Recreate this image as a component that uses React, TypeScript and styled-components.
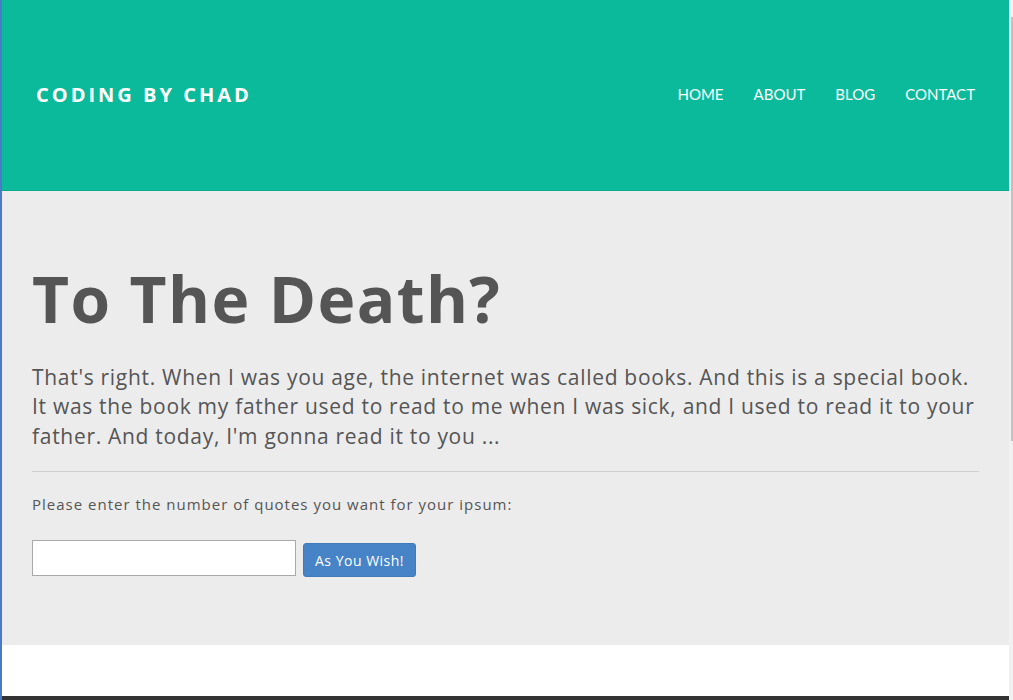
import React from "react";
import styled, { createGlobalStyle } from "styled-components";

const GlobalStyle = createGlobalStyle`
  html, body {
    margin: 0;
    padding: 0;
    overflow: hidden;
    background: #ffffff;
  }
  * { box-sizing: border-box; }
`;

const Frame = styled.div`
  display: flex;
  height: 700px;
  border-left: 2px solid #4a7bc6;
`;

const Page = styled.div`
  flex: 1;
  display: flex;
  flex-direction: column;
  min-width: 0;
`;

const Header = styled.header`
  height: 191px;
  flex-shrink: 0;
  background: #0bba9a;
  border-bottom: 1px solid #0aa78a;
  display: flex;
  align-items: center;
  justify-content: space-between;
  padding: 0 34px 2px 34px;
`;

const Logo = styled.a`
  font-family: "Open Sans", sans-serif;
  font-weight: 700;
  font-size: 20px;
  letter-spacing: 3px;
  color: #ffffff;
  text-transform: uppercase;
  text-decoration: none;
`;

const Nav = styled.nav`
  display: flex;
  gap: 30px;
`;

const NavLink = styled.a`
  font-family: Lato, sans-serif;
  font-size: 15px;
  color: #ffffff;
  text-transform: uppercase;
  text-decoration: none;
`;

const Main = styled.main`
  height: 454px;
  flex-shrink: 0;
  background: #ececec;
  padding: 60px 30px 0 30px;
  color: #555555;
`;

const Title = styled.h1`
  margin: 0;
  font-family: "Open Sans", sans-serif;
  font-weight: 700;
  font-size: 64px;
  line-height: 96px;
  letter-spacing: 1.4px;
  color: #555555;
`;

const Lead = styled.p`
  margin: 16px 0 0 0;
  font-family: "Open Sans", sans-serif;
  font-size: 21px;
  line-height: 29.4px;
  letter-spacing: 0.7px;
  color: #555555;
`;

const Rule = styled.hr`
  margin: 20px 0 20px 0;
  border: 0;
  border-top: 1px solid #cfcfcf;
`;

const Prompt = styled.p`
  margin: 0 0 24px 0;
  font-family: "Open Sans", sans-serif;
  font-size: 15px;
  line-height: 24px;
  letter-spacing: 1px;
  color: #555555;
`;

const Form = styled.form`
  display: flex;
  align-items: flex-start;
  gap: 7px;
`;

const Input = styled.input`
  width: 264px;
  height: 36px;
  border: 1px solid #a9a9a9;
  background: #ffffff;
  padding: 0 6px;
  font-size: 14px;
`;

const Button = styled.button`
  margin-top: 3px;
  height: 34px;
  padding: 0 11px;
  background: #4784c7;
  border: 1px solid #3f7ab9;
  border-radius: 3px;
  color: #ffffff;
  font-family: "Open Sans", sans-serif;
  font-size: 14px;
  letter-spacing: 0.5px;
`;

const Blank = styled.div`
  flex: 1;
  background: #ffffff;
`;

const Footer = styled.footer`
  height: 4px;
  flex-shrink: 0;
  background: #333333;
`;

const ScrollTrack = styled.div`
  width: 4px;
  flex-shrink: 0;
  background: #f1f1f1;
  display: flex;
  justify-content: flex-end;
  padding-top: 17px;
`;

const ScrollThumb = styled.div`
  width: 2px;
  height: 424px;
  background: #c1c1c1;
`;

export default function App() {
  return (
    <>
      <GlobalStyle />
      <Frame>
        <Page>
          <Header>
            <Logo href="#">Coding by Chad</Logo>
            <Nav>
              <NavLink href="#">Home</NavLink>
              <NavLink href="#">About</NavLink>
              <NavLink href="#">Blog</NavLink>
              <NavLink href="#">Contact</NavLink>
            </Nav>
          </Header>
          <Main>
            <Title>To The Death?</Title>
            <Lead>
              That's right. When I was you age, the internet was called books. And this is a special book. It was the book my father used to read to me when I was sick, and I used to read it to your father. And today, I'm gonna read it to you ...
            </Lead>
            <Rule />
            <Prompt>Please enter the number of quotes you want for your ipsum:</Prompt>
            <Form onSubmit={(e) => e.preventDefault()}>
              <Input type="text" />
              <Button type="submit">As You Wish!</Button>
            </Form>
          </Main>
          <Blank />
          <Footer />
        </Page>
        <ScrollTrack>
          <ScrollThumb />
        </ScrollTrack>
      </Frame>
    </>
  );
}
